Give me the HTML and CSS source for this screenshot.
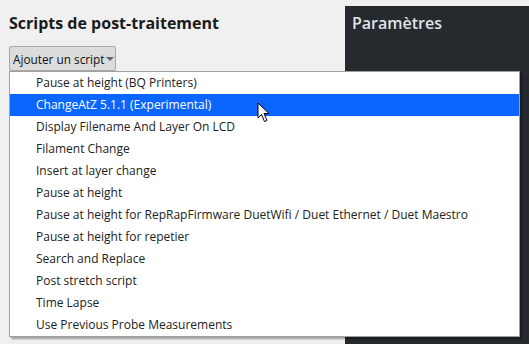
FILE: index.html
```html
<!DOCTYPE html>
<html lang="fr">
<head>
  <meta charset="UTF-8" />
  <title>Scripts de post-traitement</title>
  <link rel="stylesheet" href="styles.css">
</head>
<body>
  <div class="page">
    <div class="scripts">
      <h3>Scripts de post-traitement</h3>
      <div class="add-wrap">
        <button class="add-btn">Ajouter un script<span class="caret"></span></button>

        <!-- menu déroulant -->
        <ul class="menu">
          <li>Pause at height (BQ Printers)</li>
          <li class="active">ChangeAtZ 5.1.1 (Experimental)</li>
          <li>Display Filename And Layer On LCD</li>
          <li>Filament Change</li>
          <li>Insert at layer change</li>
          <li>Pause at height</li>
          <li>Pause at height for RepRapFirmware DuetWifi / Duet Ethernet / Duet Maestro</li>
          <li>Pause at height for repetier</li>
          <li>Search and Replace</li>
          <li>Post stretch script</li>
          <li>Time Lapse</li>
          <li>Use Previous Probe Measurements</li>
        </ul>

        <svg class="pointer" width="14" height="22" viewBox="0 0 14 22">
          <path d="M1 1 L1 16 L4.5 12.5 L7.5 19.5 L10 18.5 L7 11.5 L12 11.5 Z" fill="#fff" stroke="#000" stroke-width="1" stroke-linejoin="round"/>
        </svg>
      </div>
    </div>

    <div class="params">
      <h3>Paramètres</h3>
    </div>
  </div>
</body>
</html>
```

FILE: styles.css
```css
body {
  margin: 0;
  background: #f0f0f0;
  font-family: "Open Sans", "Noto Sans", sans-serif;
  color: #222;
}

.page {
  display: flex;
  height: 344px;
}

.scripts {
  width: 345px;
  padding: 12px 0 0 9px;
  box-sizing: border-box;
}

.scripts h3 {
  margin: 0;
  font-size: 16px;
  font-weight: 700;
  line-height: 22px;
  color: #1a1a1a;
}

.add-wrap {
  position: relative;
  margin-top: 12px;
}

.add-btn {
  font-family: inherit;
  font-size: 11.8px;
  color: #111;
  background: #dcdcdc;
  border: 1px solid #a8a8a8;
  border-radius: 2px;
  height: 25px;
  padding: 0 1px 0 3px;
  display: flex;
  align-items: center;
}

.caret {
  display: inline-block;
  margin-left: 1px;
  border-left: 4px solid transparent;
  border-right: 4px solid transparent;
  border-top: 4px solid #666;
}

/* menu déroulant */
.menu {
  position: absolute;
  top: 25px;
  left: 0;
  width: 511px;
  box-sizing: border-box;
  margin: 0;
  padding: 0;
  list-style: none;
  background: #fff;
  border: 1px solid #a0a0a0;
  box-shadow: 2px 2px 2px rgba(0,0,0,0.35);
  font-size: 12px;
  z-index: 10;
}

.menu li {
  height: 22px;
  line-height: 21px;
  padding-left: 26px;
  color: #222;
  white-space: nowrap;
}

.menu li.active {
  background: #0a66ff;
  color: #fff;
}

.pointer {
  position: absolute;
  left: 248px;
  top: 56px;
  z-index: 20;
}

.params {
  flex: 1;
  margin-top: 6px;
  background: #262a2e;
  padding: 6px 7px;
}

.params h3 {
  margin: 0;
  font-size: 16px;
  font-weight: 600;
  line-height: 22px;
  color: #dfe3e6;
}
```
